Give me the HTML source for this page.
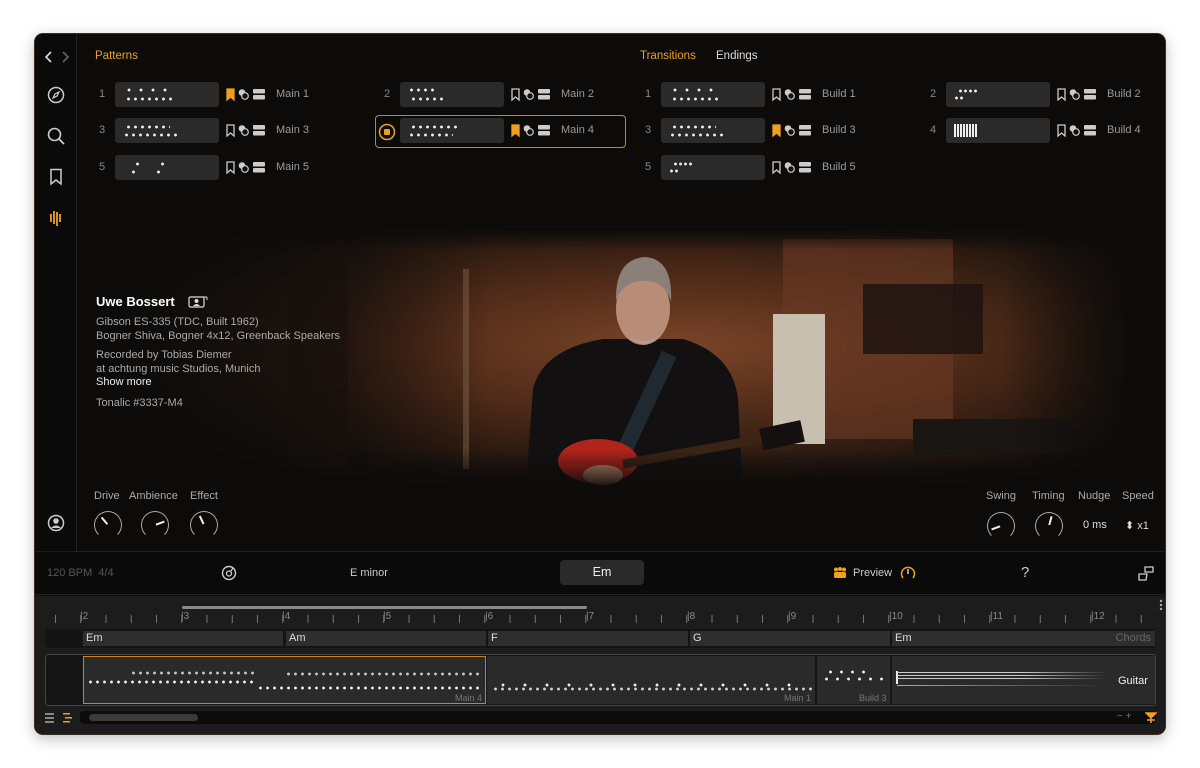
<!DOCTYPE html>
<html><head><meta charset="utf-8"><style>
*{margin:0;padding:0;box-sizing:border-box}
body{width:1200px;height:768px;background:#fff;font-family:"Liberation Sans",sans-serif;position:relative;overflow:hidden}
.win{position:absolute;left:34px;top:33px;width:1132px;height:702px;background:#0c0b0a;border-radius:9px;overflow:hidden;box-shadow:0 4px 14px rgba(0,0,0,.25);border:1px solid #3a2c20}
.a{position:absolute}
.side{left:0;top:0;width:42px;height:517px;border-right:1px solid #242220;background:#0a0a0a}
.t{position:absolute;white-space:nowrap}
.num{color:#888;font-size:11px}
.th{position:absolute;width:104px;height:25px;background:#2a2a2a;border-radius:3px}
.lbl{color:#9a9a9a;font-size:11px;white-space:nowrap}
.dots{position:absolute;height:4px;background-image:radial-gradient(circle,#eee 1.2px,transparent 1.7px);background-size:7px 4px}
.knob{position:absolute;width:28px;height:28px;border:1.5px solid #aaa;border-bottom-color:transparent;border-radius:50%}
.knob i{position:absolute;left:12px;top:3px;width:2px;height:9px;background:#eee;transform-origin:1px 10px}
.klab{color:#aaa;font-size:11px}
.cell{position:absolute;top:597px;height:15px;background:#2e2e2e;color:#ddd;font-size:11px;padding:1px 0 0 3px}
.it{position:absolute;height:25px;width:240px}
.it .num{position:absolute;left:0;top:6px}
.it .th{left:16px;top:0}
.it svg{position:absolute;top:6px;left:127px}
.it .lbl{position:absolute;left:177px;top:6px}
</style></head><body>
<svg width="0" height="0" style="position:absolute"><defs>
<g id="ic"><path d="M1 1 H8 V12 L4.5 9 L1 12Z" fill="none" stroke="#ccc" stroke-width="1.3"/><circle cx="16" cy="4.5" r="3.3" fill="#ccc"/><circle cx="19" cy="8" r="3.3" fill="#111" stroke="#ccc" stroke-width="1.2"/><rect x="27" y="1" width="12" height="4.5" rx="1" fill="#ccc"/><rect x="27" y="7" width="12" height="4.5" rx="1" fill="#ccc"/></g>
<g id="icb"><path d="M1 1 H8 V12 L4.5 9 L1 12Z" fill="#f0a020" stroke="#f0a020" stroke-width="1.3"/><circle cx="16" cy="4.5" r="3.3" fill="#ccc"/><circle cx="19" cy="8" r="3.3" fill="#111" stroke="#ccc" stroke-width="1.2"/><rect x="27" y="1" width="12" height="4.5" rx="1" fill="#ccc"/><rect x="27" y="7" width="12" height="4.5" rx="1" fill="#ccc"/></g>
</defs></svg>
<div class="win">
<div class="a side"></div>
<svg class="a" style="left:8px;top:16px" width="28" height="14"><path d="M8 2 L3 7 L8 12" stroke="#ddd" stroke-width="1.6" fill="none"/><path d="M20 2 L25 7 L20 12" stroke="#666" stroke-width="1.6" fill="none"/></svg>
<svg class="a" style="left:12px;top:52px" width="18" height="18"><circle cx="9" cy="9" r="7.5" stroke="#ccc" stroke-width="1.5" fill="none"/><path d="M12 6 L10 10 L6 12 L8 8Z" stroke="#ccc" stroke-width="1.2" fill="none"/></svg>
<svg class="a" style="left:12px;top:93px" width="18" height="18"><circle cx="7.5" cy="7.5" r="6" stroke="#ccc" stroke-width="1.6" fill="none"/><path d="M12 12 L17 17" stroke="#ccc" stroke-width="1.8"/></svg>
<svg class="a" style="left:14px;top:134px" width="14" height="18"><path d="M2 1.5 H12 V16 L7 12 L2 16Z" stroke="#ccc" stroke-width="1.5" fill="none"/></svg>
<svg class="a" style="left:14px;top:175px" width="14" height="18"><g stroke="#f0a020" stroke-width="1.8"><path d="M2 5 V13"/><path d="M5 2 V15"/><path d="M8 3 V17"/><path d="M11 5 V13"/></g></svg>
<svg class="a" style="left:12px;top:480px" width="18" height="18"><circle cx="9" cy="9" r="7.5" stroke="#ccc" stroke-width="1.5" fill="none"/><circle cx="9" cy="7" r="2.8" fill="#ccc"/><path d="M4 14 Q9 9 14 14" fill="#ccc"/></svg>

<svg class="a" style="left:43px;top:195px" width="1089" height="260">
<defs>
<radialGradient id="bg" cx="0.55" cy="0.45" r="0.6"><stop offset="0" stop-color="#7a4428"/><stop offset="0.45" stop-color="#4e2a18"/><stop offset="1" stop-color="#0c0b0a"/></radialGradient>
<linearGradient id="fl" x1="0" x2="0" y1="0" y2="1"><stop offset="0" stop-color="#0c0b0a" stop-opacity="1"/><stop offset="0.08" stop-color="#0c0b0a" stop-opacity="0"/><stop offset="0.85" stop-color="#0c0b0a" stop-opacity="0"/><stop offset="1" stop-color="#0c0b0a" stop-opacity="1"/></linearGradient>
<linearGradient id="fx" x1="0" x2="1"><stop offset="0" stop-color="#0c0b0a"/><stop offset="0.25" stop-color="#0c0b0a" stop-opacity="0.6"/><stop offset="0.38" stop-color="#0c0b0a" stop-opacity="0"/><stop offset="0.85" stop-color="#0c0b0a" stop-opacity="0"/><stop offset="0.97" stop-color="#0c0b0a"/></linearGradient>
</defs>
<rect width="1089" height="260" fill="url(#bg)"/>
<g transform="translate(-35,0)">
<rect x="245" y="10" width="60" height="230" fill="#2a1810" opacity=".6"/>
<rect x="420" y="40" width="6" height="200" fill="#8a6a50" opacity=".5"/>
<rect x="740" y="10" width="170" height="200" fill="#6a3a24" opacity=".6"/>
<rect x="730" y="85" width="52" height="130" fill="#c9bfb0"/>
<rect x="820" y="55" width="120" height="70" fill="#1a1210" opacity=".8"/>
<rect x="870" y="190" width="160" height="35" fill="#1a1614"/>
<path d="M482 270 L490 160 Q500 120 560 110 L640 110 Q690 125 695 170 L700 270Z" fill="#121010"/>
<rect x="595" y="120" width="16" height="110" fill="#1e2a30" transform="rotate(25 603 175)"/>
<ellipse cx="600" cy="80" rx="27" ry="36" fill="#b88c76"/>
<path d="M573 72 Q572 30 602 28 Q630 30 628 72 Q620 50 600 52 Q580 52 573 72Z" fill="#8a8078"/>
<path d="M578 95 Q600 135 624 95 Q615 112 600 112 Q585 112 578 95Z" fill="#a8a29a"/>
<ellipse cx="555" cy="232" rx="40" ry="22" fill="#b0241c"/>
<path d="M580 235 L745 205" stroke="#3a2414" stroke-width="9"/>
<rect x="718" y="195" width="42" height="22" fill="#141010" transform="rotate(-12 740 206)"/>
<ellipse cx="560" cy="246" rx="20" ry="10" fill="#c49070"/>
</g>
<rect width="1089" height="260" fill="url(#fx)"/>
<rect width="1089" height="260" fill="url(#fl)"/>
</svg>

<div class="t" style="left:60px;top:16px;color:#f0a020;font-size:11.5px">Patterns</div>
<div class="t" style="left:605px;top:16px;color:#f0a020;font-size:11.5px">Transitions</div>
<div class="t" style="left:681px;top:16px;color:#ddd;font-size:11.5px">Endings</div>

<div class="a" style="left:340px;top:81px;width:251px;height:33px;border:1px solid #c8861a;border-radius:4px"></div>
<svg class="a" style="left:343px;top:89px" width="18" height="18"><circle cx="9" cy="9" r="7.5" stroke="#f0a020" stroke-width="1.5" fill="none"/><rect x="6" y="6" width="6" height="6" rx="1" fill="#f0a020"/></svg>

<div class="t" style="left:61px;top:260px;color:#fff;font-size:13px;font-weight:bold">Uwe Bossert</div>
<svg class="a" style="left:153px;top:262px" width="20" height="12"><rect x="1" y="1" width="15" height="10" rx="1.5" stroke="#ddd" stroke-width="1.2" fill="none"/><circle cx="8.5" cy="5" r="2" fill="#ddd"/><path d="M5 10 Q8.5 6 12 10" fill="#ddd"/><path d="M15 1 L19 1 M19 1 L19 4" stroke="#ddd" stroke-width="1"/></svg>
<div class="t" style="left:61px;top:281px;color:#aaa;font-size:11px;line-height:14px">Gibson ES-335 (TDC, Built 1962)<br>Bogner Shiva, Bogner 4x12, Greenback Speakers</div>
<div class="t" style="left:61px;top:314px;color:#aaa;font-size:11px;line-height:14px">Recorded by Tobias Diemer<br>at achtung music Studios, Munich</div>
<div class="t" style="left:61px;top:342px;color:#eee;font-size:11px">Show more</div>
<div class="t" style="left:61px;top:363px;color:#aaa;font-size:11px">Tonalic #3337-M4</div>

<div class="t klab" style="left:59px;top:456px">Drive</div>
<div class="t klab" style="left:94px;top:456px">Ambience</div>
<div class="t klab" style="left:155px;top:456px">Effect</div>
<div class="knob" style="left:59px;top:477px"><i style="transform:rotate(-40deg)"></i></div>
<div class="knob" style="left:106px;top:477px"><i style="transform:rotate(70deg)"></i></div>
<div class="knob" style="left:155px;top:477px"><i style="transform:rotate(-25deg)"></i></div>
<div class="t klab" style="left:951px;top:456px">Swing</div>
<div class="t klab" style="left:997px;top:456px">Timing</div>
<div class="t klab" style="left:1043px;top:456px">Nudge</div>
<div class="t klab" style="left:1087px;top:456px">Speed</div>
<div class="knob" style="left:952px;top:478px"><i style="transform:rotate(-110deg)"></i></div>
<div class="knob" style="left:1000px;top:478px"><i style="transform:rotate(15deg)"></i></div>
<div class="t" style="left:1048px;top:485px;color:#ddd;font-size:11px">0 ms</div>
<div class="t" style="left:1090px;top:485px;color:#ddd;font-size:11px">⬍ x1</div>

<div class="a" style="left:0;top:517px;width:1132px;height:44px;background:#0a0a0a;border-top:1px solid #1e1e1e;border-bottom:1px solid #222"></div>
<div class="t" style="left:12px;top:533px;color:#555;font-size:11px">120 BPM&nbsp; 4/4</div>
<svg class="a" style="left:186px;top:531px" width="16" height="16"><circle cx="8" cy="8" r="6.5" stroke="#ccc" stroke-width="1.4" fill="none"/><circle cx="8" cy="8.5" r="2.5" stroke="#ccc" stroke-width="1.3" fill="none"/><path d="M10 6 L12 3" stroke="#ccc" stroke-width="1.3"/></svg>
<div class="t" style="left:315px;top:533px;color:#ccc;font-size:11px">E minor</div>
<div class="a" style="left:525px;top:526px;width:84px;height:25px;background:#2a2a2a;border-radius:4px;color:#eee;font-size:12.5px;text-align:center;line-height:25px">Em</div>
<svg class="a" style="left:798px;top:533px" width="14" height="12"><g fill="#f0a020"><circle cx="3" cy="2.5" r="2"/><circle cx="7" cy="2" r="2"/><circle cx="11" cy="2.5" r="2"/><rect x="1" y="5" width="12" height="6" rx="1.5"/></g></svg>
<div class="t" style="left:818px;top:533px;color:#ccc;font-size:11px">Preview</div>
<svg class="a" style="left:865px;top:531px" width="16" height="16"><path d="M3 13 A6.5 6.5 0 1 1 13 13" stroke="#f0a020" stroke-width="1.5" fill="none"/><path d="M8 4 V9" stroke="#ddd" stroke-width="1.4"/></svg>
<div class="t" style="left:986px;top:530px;color:#ccc;font-size:15px">?</div>
<svg class="a" style="left:1102px;top:530px" width="18" height="18"><path d="M8 3 H16 V8 H8Z M2 10 H10 L9 16 H2Z" stroke="#ccc" stroke-width="1.3" fill="none"/></svg>

<div class="a" style="left:0;top:562px;width:1132px;height:140px;background:#1c1c1c"></div>
<div class="a" style="left:147px;top:572px;width:405px;height:3px;background:#8a8a8a;border-radius:2px"></div>
<div class="a" style="left:1124px;top:565px;width:4px;height:11px;background:radial-gradient(circle,#aaa 1px,transparent 1.4px);background-size:4px 4px"></div>
<div class="a" style="left:0;top:581px;width:1132px;height:8px;background-image:linear-gradient(90deg,#777 1px,transparent 1px);background-size:25.25px 8px;background-position:20px 0"></div>
<div class="a" style="left:10px;top:595px;width:1111px;height:19px;background:#141414;border-radius:3px"></div>
<div class="cell" style="left:48px;width:200px">Em</div>
<div class="cell" style="left:251px;width:200px">Am</div>
<div class="cell" style="left:453px;width:200px">F</div>
<div class="cell" style="left:655px;width:200px">G</div>
<div class="cell" style="left:857px;width:263px">Em<span style="position:absolute;right:4px;color:#666">Chords</span></div>
<div class="a" style="left:10px;top:620px;width:1111px;height:52px;background:#151515;border:1px solid #444;border-radius:3px"></div>
<div class="a" style="left:48px;top:622px;width:403px;height:48px;background:#2a2a2a;border:1px solid #c8861a"></div>
<div class="a" style="left:452px;top:622px;width:328px;height:48px;background:#2a2a2a"></div>
<div class="a" style="left:782px;top:622px;width:73px;height:48px;background:#2a2a2a"></div>
<div class="a" style="left:857px;top:622px;width:263px;height:48px;background:#2a2a2a"></div>
<div class="t" style="left:420px;top:659px;color:#777;font-size:9px">Main 4</div>
<div class="t" style="left:749px;top:659px;color:#777;font-size:9px">Main 1</div>
<div class="t" style="left:824px;top:659px;color:#777;font-size:9px">Build 3</div>
<div class="t" style="left:1083px;top:641px;color:#eee;font-size:11px">Guitar</div>
<div class="dots" style="left:52px;top:646px;width:170px"></div>
<div class="dots" style="left:95px;top:637px;width:125px;opacity:.8"></div>
<div class="dots" style="left:222px;top:652px;width:225px"></div>
<div class="dots" style="left:250px;top:638px;width:195px;opacity:.8"></div>
<div class="dots" style="left:457px;top:653px;width:320px;opacity:.85"></div>
<div class="dots" style="left:457px;top:649px;width:300px;background-size:22px 4px"></div>
<div class="dots" style="left:786px;top:643px;width:65px;background-size:11px 4px"></div>
<div class="dots" style="left:790px;top:636px;width:45px;background-size:11px 4px"></div>
<div class="a" style="left:861px;top:637px;width:2px;height:13px;background:#eee"></div>
<div class="a" style="left:862px;top:638px;width:210px;height:9px;background:repeating-linear-gradient(180deg,#ccc 0 1px,transparent 1px 3px);-webkit-mask:linear-gradient(90deg,#000 60%,transparent)"></div>
<div class="a" style="left:862px;top:651px;width:210px;height:1px;background:linear-gradient(90deg,#aaa,transparent)"></div>
<div class="a" style="left:45px;top:677px;width:1076px;height:13px;background:#0c0c0c;border-radius:4px"></div>
<div class="a" style="left:54px;top:680px;width:109px;height:7px;background:#3a3a3a;border-radius:4px"></div>
<div class="t" style="left:1082px;top:677px;color:#777;font-size:10px">− +</div>
<svg class="a" style="left:1110px;top:678px" width="12" height="12"><path d="M1 1 H11 L6 6Z M6 6 V11 M2 8 H10" stroke="#f0a020" stroke-width="1.5" fill="#f0a020"/></svg>
<svg class="a" style="left:10px;top:678px" width="30" height="12"><g fill="#888"><rect x="0" y="1" width="9" height="2"/><rect x="0" y="5" width="9" height="2"/><rect x="0" y="9" width="9" height="2"/></g><g fill="#f0a020"><rect x="18" y="1" width="7" height="1.5"/><rect x="20" y="5" width="7" height="1.5"/><rect x="18" y="9" width="7" height="1.5"/></g></svg>
</div>

<div class="it" style="left:99px;top:82px"><span class="num">1</span><div class="th"><div class="dots" style="left:8px;top:6px;width:48px;background-size:12px 4px"></div><div class="dots" style="left:10px;top:15px;width:48px"></div></div><svg width="42" height="14"><use href="#icb"/></svg><span class="lbl">Main 1</span></div>
<div class="it" style="left:384px;top:82px"><span class="num">2</span><div class="th"><div class="dots" style="left:8px;top:6px;width:28px"></div><div class="dots" style="left:10px;top:15px;width:33px"></div></div><svg width="42" height="14"><use href="#ic"/></svg><span class="lbl">Main 2</span></div>
<div class="it" style="left:99px;top:118px"><span class="num">3</span><div class="th"><div class="dots" style="left:10px;top:7px;width:45px"></div><div class="dots" style="left:8px;top:15px;width:55px"></div></div><svg width="42" height="14"><use href="#ic"/></svg><span class="lbl">Main 3</span></div>
<div class="it" style="left:384px;top:118px"><div class="th"><div class="dots" style="left:10px;top:7px;width:50px"></div><div class="dots" style="left:8px;top:15px;width:45px"></div></div><svg width="42" height="14"><use href="#icb"/></svg><span class="lbl">Main 4</span></div>
<div class="it" style="left:99px;top:155px"><span class="num">5</span><div class="th"><div class="dots" style="left:10px;top:7px;width:50px;background-size:25px 4px"></div><div class="dots" style="left:6px;top:15px;width:40px;background-size:25px 4px"></div></div><svg width="42" height="14"><use href="#ic"/></svg><span class="lbl">Main 5</span></div>
<div class="it" style="left:645px;top:82px"><span class="num">1</span><div class="th"><div class="dots" style="left:8px;top:6px;width:48px;background-size:12px 4px"></div><div class="dots" style="left:10px;top:15px;width:48px"></div></div><svg width="42" height="14"><use href="#ic"/></svg><span class="lbl">Build 1</span></div>
<div class="it" style="left:930px;top:82px"><span class="num">2</span><div class="th"><div class="dots" style="left:12px;top:7px;width:20px;background-size:5px 4px"></div><div class="dots" style="left:8px;top:14px;width:10px;background-size:5px 4px"></div></div><svg width="42" height="14"><use href="#ic"/></svg><span class="lbl">Build 2</span></div>
<div class="it" style="left:645px;top:118px"><span class="num">3</span><div class="th"><div class="dots" style="left:10px;top:7px;width:45px"></div><div class="dots" style="left:8px;top:15px;width:55px"></div></div><svg width="42" height="14"><use href="#icb"/></svg><span class="lbl">Build 3</span></div>
<div class="it" style="left:930px;top:118px"><span class="num">4</span><div class="th"><div class="a" style="left:8px;top:6px;width:24px;height:13px;background:repeating-linear-gradient(90deg,#eee 0 2px,transparent 2px 3px)"></div></div><svg width="42" height="14"><use href="#ic"/></svg><span class="lbl">Build 4</span></div>
<div class="it" style="left:645px;top:155px"><span class="num">5</span><div class="th"><div class="dots" style="left:12px;top:7px;width:20px;background-size:5px 4px"></div><div class="dots" style="left:8px;top:14px;width:10px;background-size:5px 4px"></div></div><svg width="42" height="14"><use href="#ic"/></svg><span class="lbl">Build 5</span></div>

<div style="position:absolute;left:0;top:611px;color:#888;font-size:10px">
<span class="t" style="left:80px">|2</span><span class="t" style="left:181px">|3</span><span class="t" style="left:282px">|4</span><span class="t" style="left:383px">|5</span><span class="t" style="left:485px">|6</span><span class="t" style="left:586px">|7</span><span class="t" style="left:687px">|8</span><span class="t" style="left:788px">|9</span><span class="t" style="left:889px">|10</span><span class="t" style="left:990px">|11</span><span class="t" style="left:1091px">|12</span>
</div>
</body></html>
